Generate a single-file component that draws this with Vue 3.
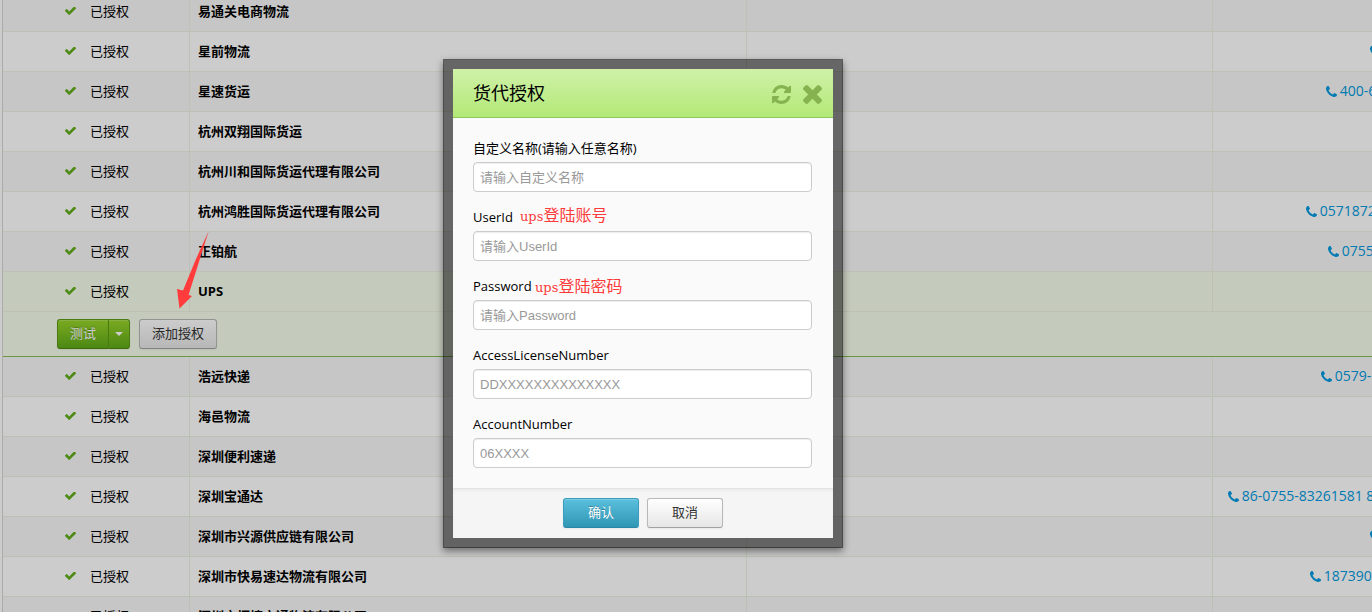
<script setup>
import { ref } from 'vue'

const before = [
  { name: '易通关电商物流' },
  { name: '星前物流', phone: '', indent: 157 },
  { name: '星速货运', phone: '400-6', indent: 113 },
  { name: '杭州双翔国际货运' },
  { name: '杭州川和国际货运代理有限公司' },
  { name: '杭州鸿胜国际货运代理有限公司', phone: '0571872', indent: 93 },
  { name: '正铂航', phone: '0755', indent: 115 },
  { name: 'UPS', active: true },
]
const after = [
  { name: '浩远快递', phone: '0579-', indent: 108 },
  { name: '海邑物流' },
  { name: '深圳便利速递' },
  { name: '深圳宝通达', phone: '86-0755-83261581 8', indent: 15 },
  { name: '深圳市兴源供应链有限公司', phone: '', indent: 157 },
  { name: '深圳市快易速达物流有限公司', phone: '187390', indent: 97 },
  { name: '深圳市恒捷交通物流有限公司' },
]
const stripe = (row, i) => ({ ...row, striped: i % 2 === 0 })
const rows = [
  ...before.map(stripe),
  { actions: true },
  ...after.map(stripe).map((row) => ({ ...row, late: true })),
]

const fields = ref([
  { id: 'alias', label: '自定义名称(请输入任意名称)', placeholder: '请输入自定义名称', value: '' },
  { id: 'userid', label: 'UserId', placeholder: '请输入UserId', value: '' },
  { id: 'password', label: 'Password', placeholder: '请输入Password', value: '' },
  { id: 'license', label: 'AccessLicenseNumber', placeholder: 'DDXXXXXXXXXXXXXX', value: '' },
  { id: 'account', label: 'AccountNumber', placeholder: '06XXXX', value: '' },
])
</script>

<template>
  <div class="page">
    <div class="sheet">
      <table class="carriers">
        <colgroup>
          <col class="col-status" />
          <col class="col-name" />
          <col class="col-note" />
          <col />
        </colgroup>
        <tbody>
          <template v-for="(row, i) in rows" :key="i">
            <tr v-if="row.actions" class="actions">
              <td colspan="4">
                <div class="toolbar">
                  <div class="split">
                    <button type="button" class="btn green main">测试</button>
                    <button type="button" class="btn green toggle" aria-label="更多">
                      <span class="caret"></span>
                    </button>
                  </div>
                  <button type="button" class="btn">添加授权</button>
                </div>
              </td>
            </tr>
            <tr v-else :class="{ striped: row.striped, active: row.active, late: row.late }">
              <td class="state">
                <div class="status">
                  <svg class="check" viewBox="121 398 1550 1124" preserveAspectRatio="none"><path d="M1671 566q0 40-28 68l-724 724-136 136q-28 28-68 28t-68-28l-136-136-362-362q-28-28-28-68t28-68l136-136q28-28 68-28t68 28l294 295 656-657q28-28 68-28t68 28l136 136q28 28 28 68z" /></svg>
                  <span>已授权</span>
                </div>
              </td>
              <td class="name">{{ row.name }}</td>
              <td></td>
              <td class="contact">
                <a v-if="row.indent" href="#" class="phone" :style="{ marginLeft: row.indent + 'px' }">
                  <svg viewBox="192 128 1408 1408"><path d="M1600 1240q0 27-10 70.500t-21 68.500q-21 50-122 106-94 51-186 51-27 0-53-3.500t-57.500-12.500-47-14.500-55.500-20.500-49-18q-98-35-175-83-127-79-264-216t-216-264q-48-77-83-175-3-9-18-49t-20.500-55.500-14.500-47-12.500-57.500-3.500-53q0-92 51-186 56-101 106-122 25-11 68.500-21t70.500-10q14 0 21 3 18 6 53 76 11 19 30 54t35 63.500 31 53.500q3 4 17.500 25t21.500 35.500 7 28.500q0 20-28.500 50t-62 55-62 53-28.500 46q0 9 5 22.500t8.500 20.500 14 24 11.500 19q76 137 174 235t235 174q2 1 19 11.500t24 14 20.500 8.500 22.500 5q18 0 46-28.500t53-62 55-62 50-28.500q14 0 28.500 7t35.500 21.500 25 17.500q25 15 53.500 31t63.500 35 54 30q70 35 76 53 3 7 3 21z" /></svg>
                  <span>{{ row.phone }}</span>
                </a>
              </td>
            </tr>
          </template>
        </tbody>
      </table>
    </div>

    <div class="backdrop"></div>

    <svg class="arrow" width="34" height="80" viewBox="0 0 34 80">
      <path d="M32.700 1L20 29L7 60.500L1 59L3.500 78.500L16 66L12.500 65L22 35Z" />
    </svg>

    <form class="dialog" role="dialog" aria-labelledby="dialog-title" @submit.prevent>
      <header class="head">
        <h2 id="dialog-title">货代授权</h2>
        <button type="button" class="icon" aria-label="刷新">
          <svg viewBox="128 128 1536 1536"><path d="M1639 1056q0 5-1 7-64 268-268 434.500t-478 166.500q-146 0-282.500-55t-243.500-157l-129 129q-19 19-45 19t-45-19-19-45v-448q0-26 19-45t45-19h448q26 0 45 19t19 45-19 45l-137 137q71 66 161 102t187 36q134 0 250-65t186-179q11-17 53-117 8-23 30-23h192q13 0 22.500 9.500t9.500 22.500zm25-800v448q0 26-19 45t-45 19h-448q-26 0-45-19t-19-45 19-45l138-138q-148-137-349-137-134 0-250 65t-186 179q-11 17-53 117-8 23-30 23h-199q-13 0-22.500-9.500t-9.500-22.500v-7q65-268 270-434.500t480-166.500q146 0 284 55.500t245 156.500l130-129q19-19 45-19t45 19 19 45z" /></svg>
        </button>
        <button type="button" class="icon" aria-label="关闭">
          <svg viewBox="302 302 1188 1188"><path d="M1490 1322q0 40-28 68l-136 136q-28 28-68 28t-68-28l-294-294-294 294q-28 28-68 28t-68-28l-136-136q-28-28-28-68t28-68l294-294-294-294q-28-28-28-68t28-68l136-136q28-28 68-28t68 28l294 294 294-294q28-28 68-28t68 28l136 136q28 28 28 68t-28 68l-294 294 294 294q28 28 28 68z" transform="translate(0 -64)" /></svg>
        </button>
      </header>
      <div class="body">
        <div v-for="f in fields" :key="f.id" class="field">
          <label :for="f.id">{{ f.label }}</label>
          <input :id="f.id" v-model="f.value" type="text" :placeholder="f.placeholder" />
        </div>
        <p class="note note-user"><span>ups</span>登陆账号</p>
        <p class="note note-pass"><span>ups</span>登陆密码</p>
      </div>
      <footer class="foot">
        <button type="submit" class="btn blue">确认</button>
        <button type="button" class="btn">取消</button>
      </footer>
    </form>
  </div>
</template>

<style>
body {
  background: #fff;
}
</style>

<style scoped>
.page {
  position: relative;
  box-sizing: border-box;
  height: 100vh;
  padding-left: 2px;
  overflow: hidden;
  font: 13px/20px "Open Sans", "Noto Sans CJK SC", sans-serif;
  color: #000;
}
.sheet {
  margin-top: -8px;
  border-left: 1px solid #d6d6d6;
}
.carriers {
  width: 100%;
  table-layout: fixed;
  border-collapse: separate;
  border-spacing: 0;
}
.col-status {
  width: 187px;
}
.col-name {
  width: 40.7%;
}
.col-note {
  width: 34%;
}
td {
  box-sizing: border-box;
  height: 40px;
  padding: 0;
  border-right: 1px solid #f0f0e1;
  border-bottom: 1px solid #f0f0e1;
  white-space: nowrap;
  overflow: hidden;
}
td:last-child {
  border-right: 0;
}
.late td {
  border-color: #e9f0e0;
}
.striped td {
  background: #f8f8f8;
}
.active td,
.actions td {
  background: #f6feeb;
}
.active td {
  border-color: #eef0e2;
}
.actions td {
  height: 45px;
  border-bottom-color: #86bd55;
}
.state,
.name {
  padding-bottom: 2px;
}
.status {
  display: flex;
  align-items: center;
  gap: 14px;
  padding-left: 62px;
}
.check {
  width: 11px;
  height: 8px;
  fill: #62ad1c;
}
.name {
  padding-left: 8px;
  font-weight: 700;
}
.phone {
  display: inline-flex;
  align-items: center;
  gap: 3px;
  font-size: 14px;
  color: #0099e0;
  text-decoration: none;
}
.phone svg {
  flex: none;
  width: 11px;
  height: 11px;
  fill: currentColor;
}
.toolbar {
  display: flex;
  gap: 9px;
  padding-left: 54px;
}
.split {
  display: flex;
}
.btn {
  box-sizing: border-box;
  height: 30px;
  padding: 0 12px 2px;
  border: 1px solid #b8b8b8;
  border-bottom-color: #a2a2a2;
  border-radius: 3px;
  background: linear-gradient(#fff, #e6e6e6);
  box-shadow: inset 0 1px 0 rgba(255, 255, 255, 0.2), 0 1px 2px rgba(0, 0, 0, 0.05);
  font: inherit;
  color: #333;
}
.green {
  border-color: #5d9a18;
  border-bottom-color: #4d8410;
  background: linear-gradient(#98d42a, #60ab18);
  color: #fff;
  text-shadow: 0 -1px 0 rgba(0, 0, 0, 0.25);
}
.main {
  border-right: 0;
  border-radius: 3px 0 0 3px;
}
.toggle {
  display: flex;
  align-items: center;
  justify-content: center;
  width: 22px;
  padding: 0;
  border-radius: 0 3px 3px 0;
}
.caret {
  border: 4px solid transparent;
  border-top-color: #fff;
  border-bottom: 0;
}
.backdrop {
  position: absolute;
  inset: 0;
  background: rgba(0, 0, 0, 0.2);
}
.arrow {
  position: absolute;
  left: 176px;
  top: 230px;
  fill: #ff3b3b;
}
.dialog {
  position: absolute;
  left: 443px;
  top: 59px;
  width: 380px;
  border: 10px solid rgba(0, 0, 0, 0.5);
  background: #fafafa;
  background-clip: padding-box;
  box-shadow: 0 3px 7px rgba(0, 0, 0, 0.45);
}
.head {
  display: flex;
  align-items: center;
  gap: 12px;
  height: 48px;
  padding: 0 11px 0 20px;
  border-bottom: 1px solid #8fc75f;
  background: linear-gradient(#d0f1a8, #b3e977);
}
h2 {
  flex: 1;
  margin: 0;
  font-size: 18px;
  font-weight: 400;
  line-height: 30px;
}
.icon {
  display: flex;
  padding: 2px 0 0;
  border: 0;
  background: none;
}
.icon svg {
  width: 19px;
  height: 19px;
  fill: #86b34f;
}
.body {
  position: relative;
  display: flex;
  flex-direction: column;
  gap: 15px;
  padding: 20px 21px 20px 20px;
}
.field {
  display: flex;
  flex-direction: column;
  align-items: flex-start;
  gap: 4px;
}
input {
  box-sizing: border-box;
  width: 100%;
  height: 30px;
  padding: 0 6px;
  border: 1px solid #ccc;
  border-radius: 4px;
  background: #fff;
  box-shadow: inset 0 1px 1px rgba(0, 0, 0, 0.075);
  font: 13px/20px "Liberation Sans", "Noto Sans CJK SC", sans-serif;
  color: #555;
}
input::placeholder {
  color: #999;
}
.note {
  position: absolute;
  margin: 0;
  font: 16px/20px "Liberation Serif", "Noto Sans CJK SC", serif;
  color: #fc3a3a;
}
.note span {
  font-family: "DejaVu Serif", serif;
  font-size: 13px;
}
.note-user {
  left: 67px;
  top: 88px;
}
.note-pass {
  left: 82px;
  top: 159px;
}
.foot {
  display: flex;
  justify-content: center;
  gap: 8px;
  padding: 9px 0 10px;
  border-top: 1px solid #e4e4e4;
  background: #f5f5f5;
  box-shadow: inset 0 2px 3px rgba(0, 0, 0, 0.04);
}
.foot .btn {
  width: 76px;
}
.blue {
  border-color: #3a9dbd;
  border-bottom-color: #2b87a5;
  background: linear-gradient(#5bc0de, #2f96b4);
  color: #fff;
  text-shadow: 0 -1px 0 rgba(0, 0, 0, 0.25);
}
</style>
